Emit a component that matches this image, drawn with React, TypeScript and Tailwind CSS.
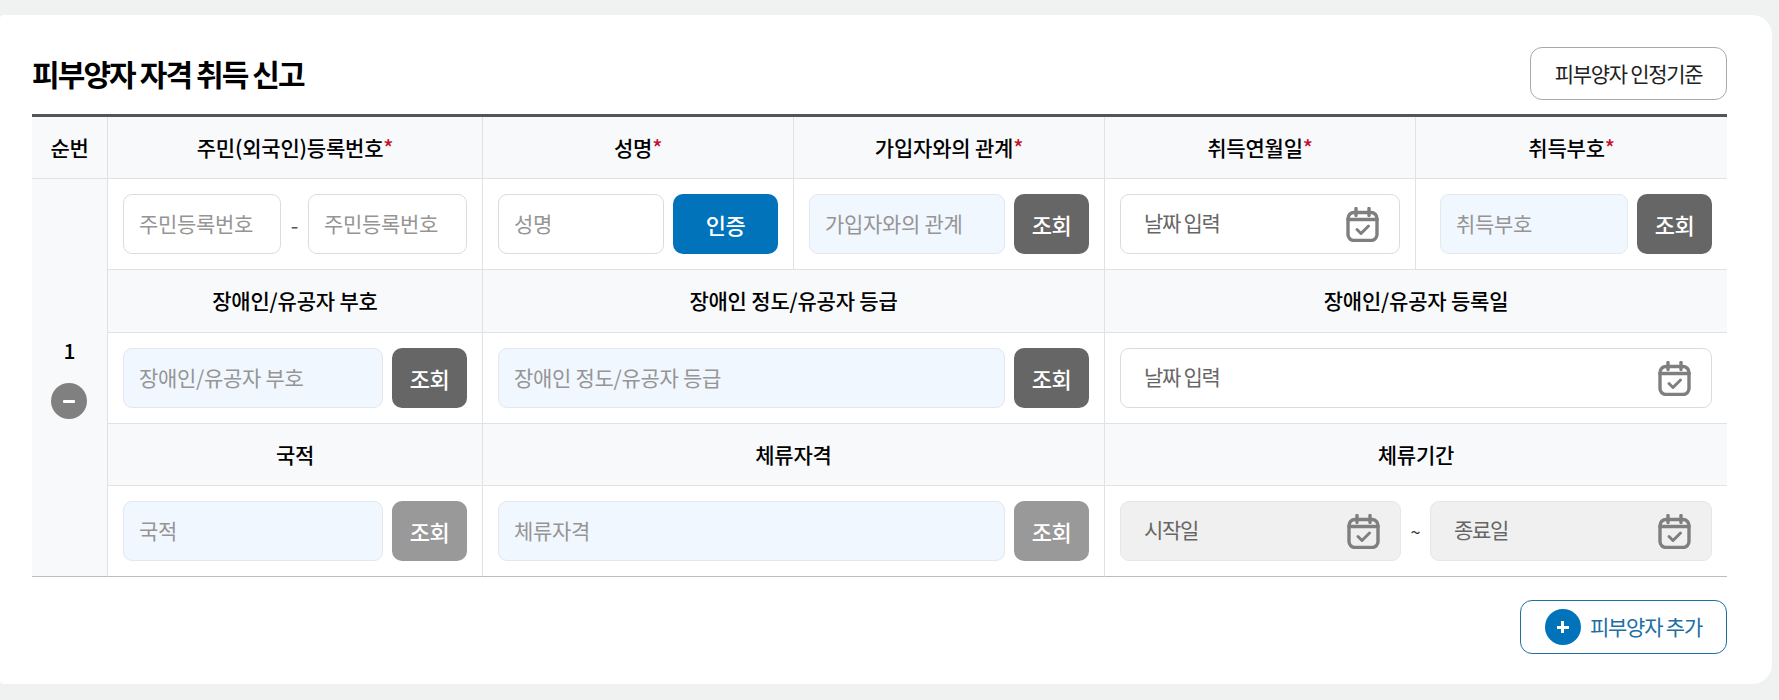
import React from "react";

const CalendarIcon: React.FC = () => (
  <svg width="33" height="35" viewBox="0 0 33 35" fill="none" stroke="#7f7f7f" strokeWidth="3.4" strokeLinecap="round" strokeLinejoin="round" className="shrink-0">
    <rect x="2" y="5.5" width="29" height="28" rx="6" />
    <path d="M10 1.5v7M23 1.5v7" />
    <path d="M2 12.5h29" />
    <path d="M11 22.5l4 4 7.5-7.5" strokeWidth="3" />
  </svg>
);

const TextInput: React.FC<{ placeholder: string; blue?: boolean; className?: string }> = ({ placeholder, blue, className }) => (
  <input
    readOnly
    placeholder={placeholder}
    className={`h-[60px] min-w-0 rounded-[9px] border px-[15px] pb-[2px] text-[21px] tracking-[-0.3px] outline-none placeholder:text-[#959595] ${
      blue ? "border-[#e3e8ee] bg-[#f1f7fe]" : "border-[#dcdcdc] bg-white"
    } ${className ?? ""}`}
  />
);

const SearchBtn: React.FC<{ light?: boolean }> = ({ light }) => (
  <button className={`h-[60px] w-[75px] shrink-0 rounded-[10px] text-[22px] font-medium tracking-[-0.5px] text-white ${light ? "bg-[#999]" : "bg-[#666]"}`}>
    조회
  </button>
);

const DateInput: React.FC<{ label: string; disabled?: boolean; className?: string }> = ({ label, disabled, className }) => (
  <div
    className={`flex h-[60px] items-center justify-between rounded-[9px] border pl-[23px] pr-[20px] ${
      disabled ? "border-[#e6e6e6] bg-[#f0f0f0]" : "border-[#dcdcdc] bg-white"
    } ${className ?? ""}`}
  >
    <span className="mb-[2px] text-[21px] tracking-[-1.3px] text-[#666]">{label}</span>
    <CalendarIcon />
  </div>
);

const Head: React.FC<{ label: string; required?: boolean; colSpan?: number; last?: boolean }> = ({ label, required, colSpan, last }) => (
  <th
    colSpan={colSpan}
    className={`border-b border-[#e2e2e2] bg-[#f8f9fb] text-center text-[21px] font-medium tracking-[-0.2px] text-black ${last ? "" : "border-r"}`}
  >
    {label}
    {required && <span className="text-[#c8102e]">*</span>}
  </th>
);

const Cell: React.FC<{ children: React.ReactNode; colSpan?: number; last?: boolean; bottom?: boolean; className?: string }> = ({
  children,
  colSpan,
  last,
  bottom,
  className,
}) => (
  <td
    colSpan={colSpan}
    className={`border-b px-[15px] ${bottom ? "border-[#bdbdbd]" : "border-[#e2e2e2]"} ${last ? "" : "border-r border-r-[#e2e2e2]"} ${className ?? ""}`}
  >
    <div className="flex items-center gap-[9px]">{children}</div>
  </td>
);

const App: React.FC = () => {
  return (
    <div className="h-[700px] overflow-hidden bg-[#f0f2f2] pt-[15px] font-['Noto_Sans_CJK_KR','Noto_Sans',sans-serif]">
      <div className="h-[669px] w-[1772px] rounded-l-[4px] rounded-r-[20px] bg-white pl-[32px] pr-[45px] pt-[32px]">
        {/* Title */}
        <div className="mb-[14px] flex h-[53px] items-center justify-between">
          <h2 className="text-[30px] font-bold tracking-[-1.9px] text-black">피부양자 자격 취득 신고</h2>
          <button className="h-[53px] w-[197px] rounded-[12px] border border-[#aaa] bg-white text-[21px] tracking-[-1.3px] text-[#222]">
            피부양자 인정기준
          </button>
        </div>

        {/* Table */}
        <table className="w-[1695px] table-fixed border-separate border-spacing-0 border-t-[3px] border-[#555]">
          <colgroup>
            <col className="w-[76px]" />
            <col className="w-[375px]" />
            <col className="w-[311px]" />
            <col className="w-[311px]" />
            <col className="w-[311px]" />
            <col className="w-[311px]" />
          </colgroup>
          <tbody>
            <tr className="h-[62px]">
              <Head label="순번" />
              <Head label="주민(외국인)등록번호" required />
              <Head label="성명" required />
              <Head label="가입자와의 관계" required />
              <Head label="취득연월일" required />
              <Head label="취득부호" required last />
            </tr>
            <tr className="h-[91px]">
              <td rowSpan={5} className="border-b border-r border-[#e2e2e2] border-b-[#bdbdbd] bg-[#f8f9fb] pt-[2px] text-center">
                <div className="text-[21px] font-medium leading-[24px] text-black">1</div>
                <div className="mt-[21px] flex justify-center pr-[1px]">
                  <span className="flex h-[36px] w-[36px] items-center justify-center rounded-full bg-[#808080]">
                    <span className="h-[3px] w-[12px] rounded-[1px] bg-white" />
                  </span>
                </div>
              </td>
              <Cell>
                <TextInput placeholder="주민등록번호" className="w-[158px]" />
                <span className="w-[9px] text-center text-[22px] text-[#555]">-</span>
                <TextInput placeholder="주민등록번호" className="w-[159px]" />
              </Cell>
              <Cell>
                <TextInput placeholder="성명" className="w-[166px]" />
                <button className="h-[60px] w-[105px] shrink-0 rounded-[10px] bg-[#0073bb] text-[22px] font-medium tracking-[-0.5px] text-white">인증</button>
              </Cell>
              <Cell>
                <TextInput blue placeholder="가입자와의 관계" className="w-[196px]" />
                <SearchBtn />
              </Cell>
              <Cell>
                <DateInput label="날짜 입력" className="w-[280px]" />
              </Cell>
              <Cell last className="pl-[24px]">
                <TextInput blue placeholder="취득부호" className="w-[188px]" />
                <SearchBtn />
              </Cell>
            </tr>
            <tr className="h-[63px]">
              <Head label="장애인/유공자 부호" />
              <Head label="장애인 정도/유공자 등급" colSpan={2} />
              <Head label="장애인/유공자 등록일" colSpan={2} last />
            </tr>
            <tr className="h-[91px]">
              <Cell>
                <TextInput blue placeholder="장애인/유공자 부호" className="w-[260px]" />
                <SearchBtn />
              </Cell>
              <Cell colSpan={2}>
                <TextInput blue placeholder="장애인 정도/유공자 등급" className="w-[507px]" />
                <SearchBtn />
              </Cell>
              <Cell colSpan={2} last>
                <DateInput label="날짜 입력" className="w-[592px]" />
              </Cell>
            </tr>
            <tr className="h-[62px]">
              <Head label="국적" />
              <Head label="체류자격" colSpan={2} />
              <Head label="체류기간" colSpan={2} last />
            </tr>
            <tr className="h-[91px]">
              <Cell bottom>
                <TextInput blue placeholder="국적" className="w-[260px]" />
                <SearchBtn light />
              </Cell>
              <Cell colSpan={2} bottom>
                <TextInput blue placeholder="체류자격" className="w-[507px]" />
                <SearchBtn light />
              </Cell>
              <Cell colSpan={2} last bottom>
                <DateInput disabled label="시작일" className="w-[281px]" />
                <span className="w-[11px] text-center text-[18px] text-[#333]">~</span>
                <DateInput disabled label="종료일" className="w-[282px]" />
              </Cell>
            </tr>
          </tbody>
        </table>

        {/* Add dependent */}
        <div className="mt-[23px] flex justify-end">
          <button className="flex h-[54px] w-[207px] items-center justify-center gap-[9px] rounded-[12px] border border-[#1f6fa3] bg-white text-[21px] tracking-[-1.2px] text-[#1c6ea4]">
            <span className="relative h-[36px] w-[36px] shrink-0 rounded-full bg-[#0073bb]">
              <span className="absolute left-[12px] top-[16.5px] h-[3px] w-[12px] bg-white" />
              <span className="absolute left-[16.5px] top-[12px] h-[12px] w-[3px] bg-white" />
            </span>
            피부양자 추가
          </button>
        </div>
      </div>
    </div>
  );
};

export default App;
